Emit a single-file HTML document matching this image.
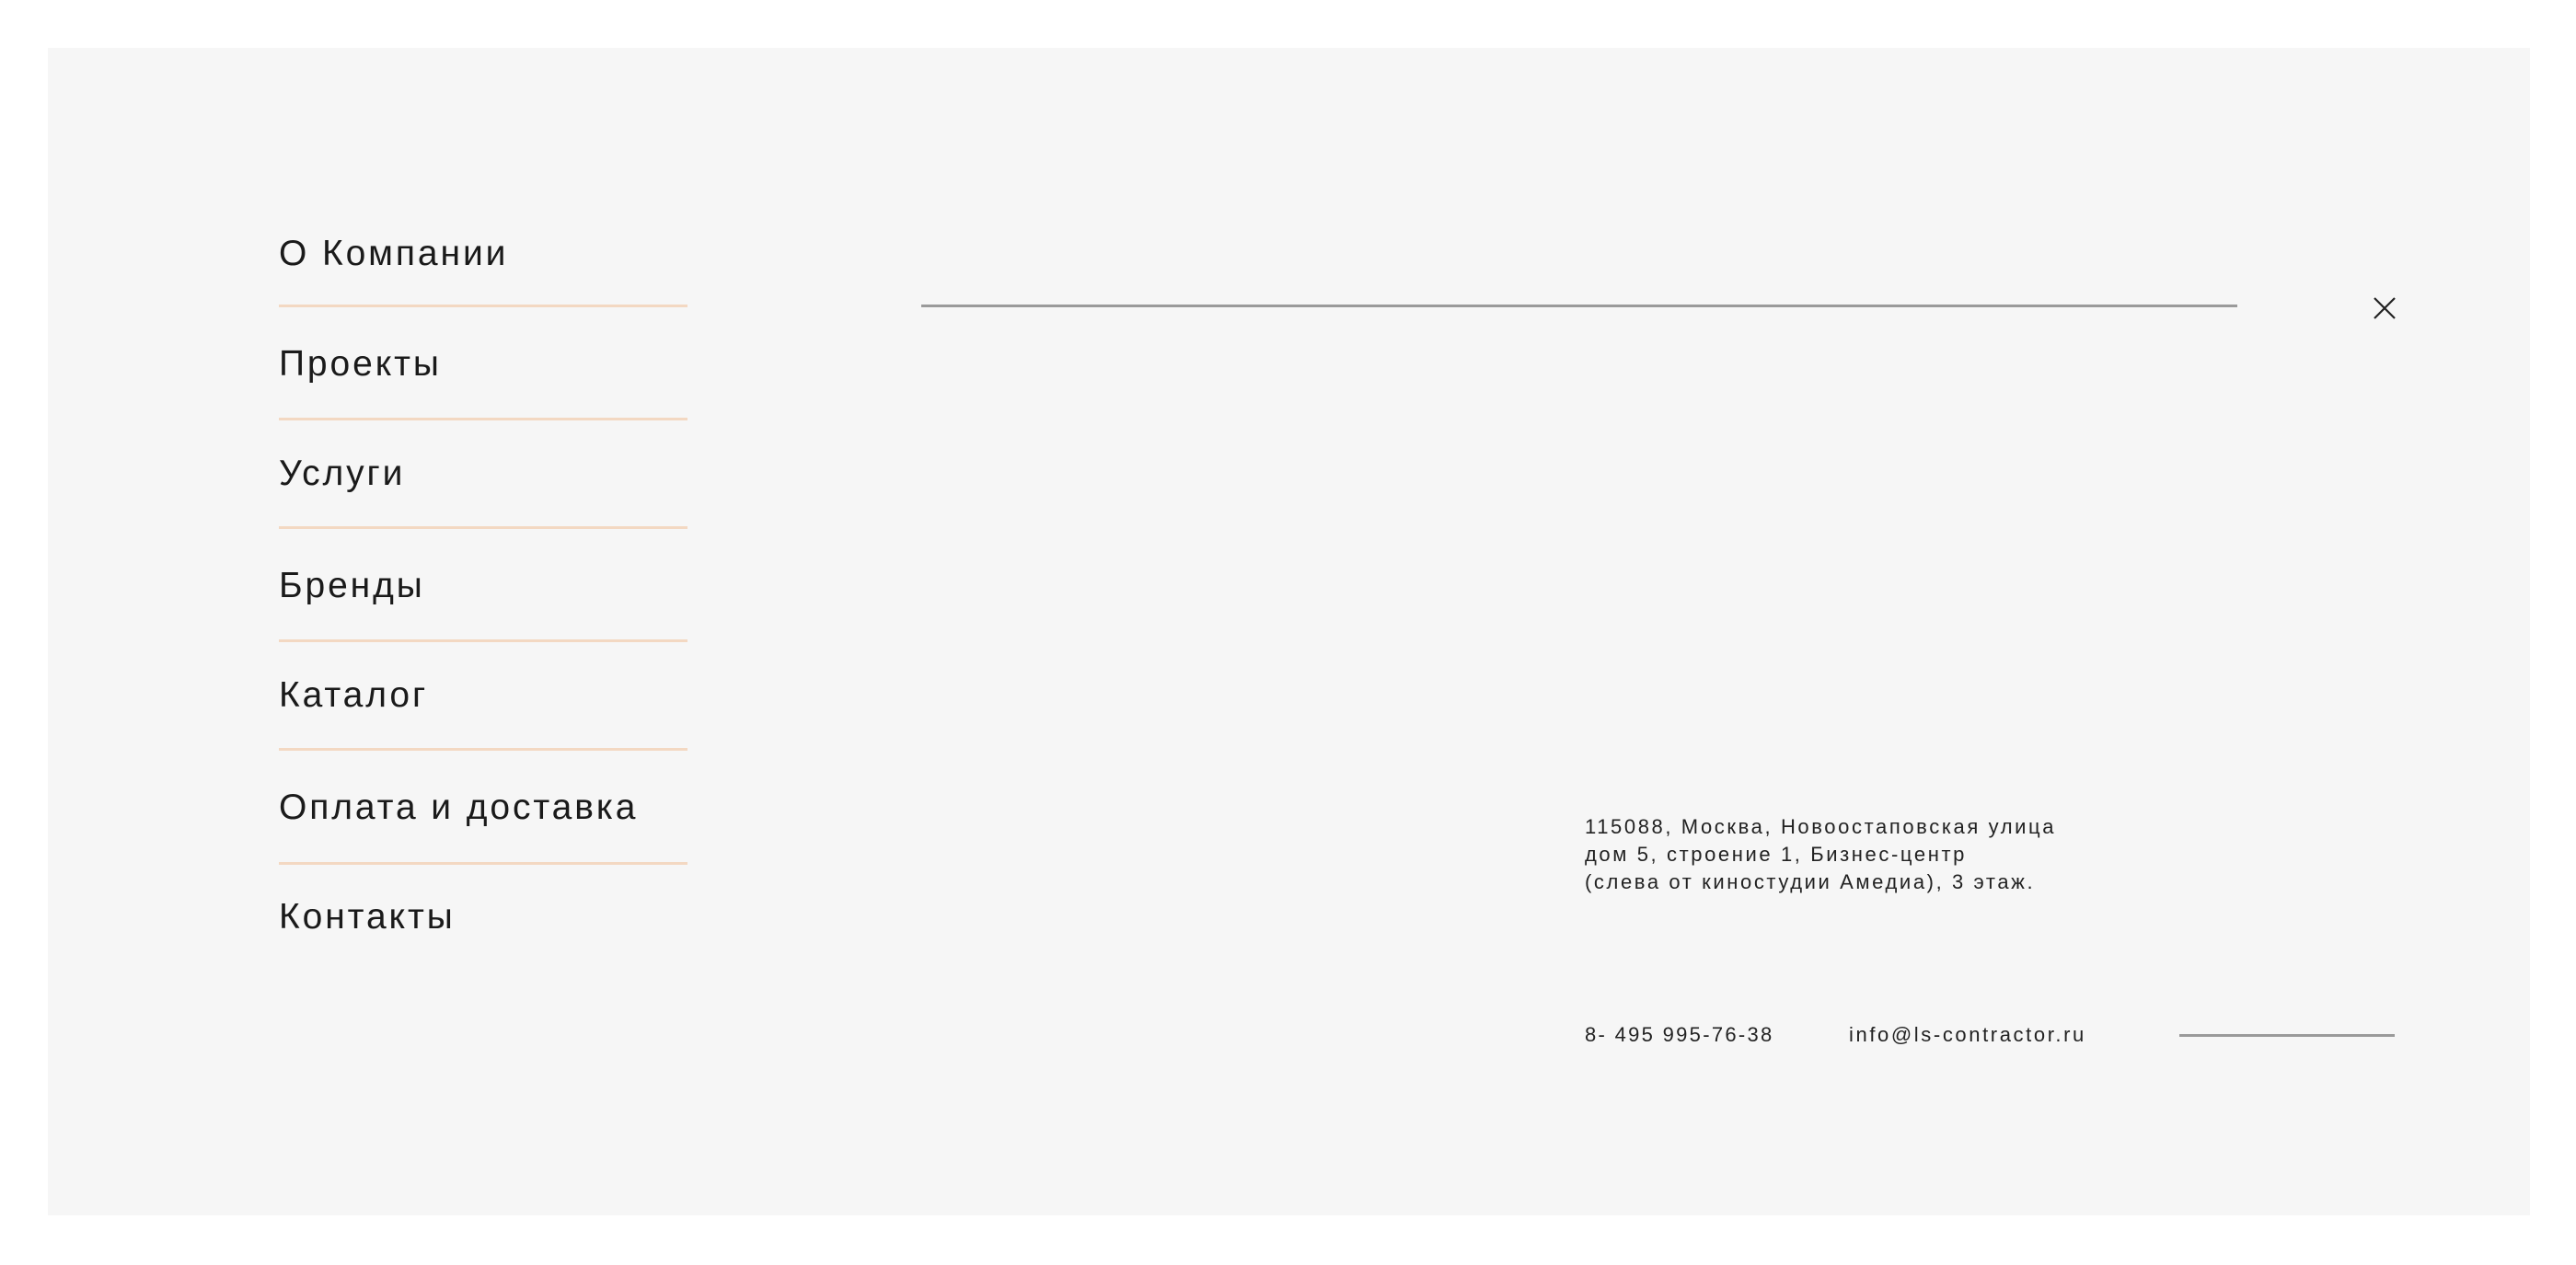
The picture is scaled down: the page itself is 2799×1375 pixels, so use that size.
<!DOCTYPE html>
<html><head><meta charset="utf-8"><style>
html,body{margin:0;padding:0;background:#fff;width:2799px;height:1375px;overflow:hidden;font-family:"Liberation Sans",sans-serif;}
#panel{position:absolute;left:52px;top:52px;width:2697px;height:1269px;background:#f6f6f6;}
.m{position:absolute;left:303px;font-size:39px;line-height:39px;color:#1a1a1a;letter-spacing:2.9px;white-space:nowrap;}
.l{position:absolute;left:303px;width:444px;height:3px;background:#f3d8c2;}
.s{position:absolute;font-size:22px;line-height:30px;color:#222;letter-spacing:2.6px;white-space:nowrap;}
</style></head><body>
<div id="panel"></div>
<div class="m" style="top:256px">О Компании</div>
<div class="l" style="top:331px"></div>
<div class="m" style="top:376px">Проекты</div>
<div class="l" style="top:454px"></div>
<div class="m" style="top:495px">Услуги</div>
<div class="l" style="top:572px"></div>
<div class="m" style="top:617px">Бренды</div>
<div class="l" style="top:695px"></div>
<div class="m" style="top:736px">Каталог</div>
<div class="l" style="top:813px"></div>
<div class="m" style="top:858px">Оплата и доставка</div>
<div class="l" style="top:937px"></div>
<div class="m" style="top:977px">Контакты</div>
<div style="position:absolute;left:1001px;top:331px;width:1430px;height:3px;background:#9a9a9a"></div>
<svg style="position:absolute;left:2578px;top:322px" width="26" height="26" viewBox="0 0 26 26"><path d="M2 2L24 24M24 2L2 24" stroke="#222" stroke-width="2.2" fill="none"/></svg>
<div class="s" style="left:1722px;top:884px">115088, Москва, Новоостаповская улица<br>дом 5, строение 1, Бизнес-центр<br>(слева от киностудии Амедиа), 3 этаж.</div>
<div class="s" style="left:1722px;top:1110px;letter-spacing:2.3px">8- 495 995-76-38</div>
<div class="s" style="left:2009px;top:1110px">info@ls-contractor.ru</div>
<div style="position:absolute;left:2368px;top:1124px;width:234px;height:3px;background:#9a9a9a"></div>
</body></html>
